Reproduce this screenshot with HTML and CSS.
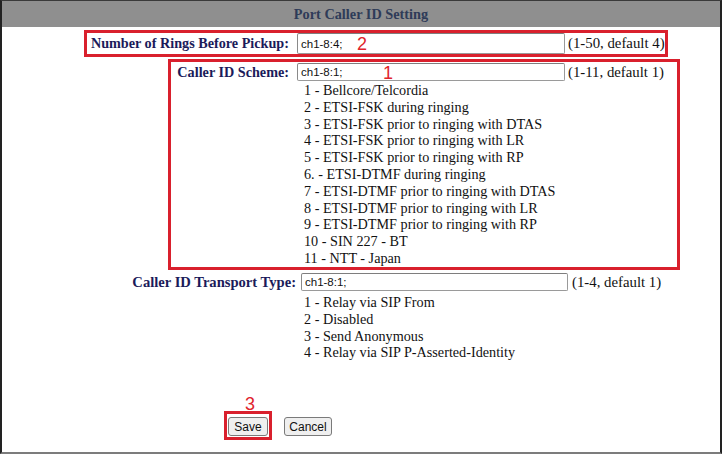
FILE: index.html
```html
<!DOCTYPE html>
<html>
<head>
<meta charset="utf-8">
<link rel="stylesheet" href="styles.css">
</head>
<body>
<div class="frame">
  <div class="header">Port Caller ID Setting</div>

  <div class="box box-rings">
    <div class="row">
      <span class="lbl lbl-rings">Number of Rings Before Pickup:</span>
      <span class="field"><input class="inp inp-rings" type="text" value="ch1-8:4;"><span class="mark mark-2">2</span></span>
      <span class="hint">(1-50, default 4)</span>
    </div>
  </div>

  <div class="box box-scheme">
    <div class="row row-scheme">
      <span class="lbl lbl-scheme">Caller ID Scheme:</span>
      <span class="field"><input class="inp inp-scheme" type="text" value="ch1-8:1;"><span class="mark mark-1">1</span></span>
      <span class="hint">(1-11, default 1)</span>
    </div>
    <ul class="opts opts-scheme">
      <li>1 - Bellcore/Telcordia</li>
      <li>2 - ETSI-FSK during ringing</li>
      <li>3 - ETSI-FSK prior to ringing with DTAS</li>
      <li>4 - ETSI-FSK prior to ringing with LR</li>
      <li>5 - ETSI-FSK prior to ringing with RP</li>
      <li>6. - ETSI-DTMF during ringing</li>
      <li>7 - ETSI-DTMF prior to ringing with DTAS</li>
      <li>8 - ETSI-DTMF prior to ringing with LR</li>
      <li>9 - ETSI-DTMF prior to ringing with RP</li>
      <li>10 - SIN 227 - BT</li>
      <li>11 - NTT - Japan</li>
    </ul>
  </div>

  <div class="transport">
    <div class="row">
      <span class="lbl lbl-transport">Caller ID Transport Type:</span>
      <input class="inp inp-transport" type="text" value="ch1-8:1;">
      <span class="hint hint-transport">(1-4, default 1)</span>
    </div>
    <ul class="opts opts-transport">
      <li>1 - Relay via SIP From</li>
      <li>2 - Disabled</li>
      <li>3 - Send Anonymous</li>
      <li>4 - Relay via SIP P-Asserted-Identity</li>
    </ul>
  </div>

  <div class="actions">
    <div class="save-wrap">
      <span class="mark mark-3">3</span>
      <button class="btn btn-save" type="button">Save</button>
    </div>
    <button class="btn btn-cancel" type="button">Cancel</button>
  </div>
</div>
</body>
</html>
```
FILE: styles.css
```css
* { box-sizing: border-box; }

html, body {
  margin: 0;
  padding: 0;
  background: #ffffff;
}

.frame {
  width: 722px;
  height: 454px;
  border-left: 2px solid #222222;
  border-right: 2px solid #222222;
  border-top: 1px solid #3a3a3a;
  border-bottom: 2px solid #7c7c7c;
  font-family: "Liberation Serif", "Times New Roman", serif;
  font-size: 14.2px;
  color: #111111;
  overflow: hidden;
}

.header {
  height: 26px;
  background: #8f8f8f;
  color: #2e3b58;
  font-weight: bold;
  font-size: 14.3px;
  text-align: center;
  line-height: 27px;
}

.row {
  display: flex;
  align-items: center;
}

.lbl {
  font-weight: bold;
  color: #1b1b5a;
  text-align: right;
  flex: none;
  white-space: nowrap;
}

.field {
  position: relative;
  display: inline-flex;
  flex: none;
}

.inp {
  font-family: "Liberation Sans", Arial, sans-serif;
  font-size: 11.5px;
  color: #111111;
  border: 1px solid #9a9a9a;
  border-top-color: #7e7e7e;
  border-left-color: #8a8a8a;
  border-radius: 2px;
  padding: 0 0 0 3px;
  background: #ffffff;
  margin: 0;
  width: 268px;
  height: 18px;
}

.hint {
  margin-left: 3px;
  white-space: nowrap;
  font-size: 14.8px;
}

.mark {
  position: absolute;
  font-family: "Liberation Sans", Arial, sans-serif;
  font-size: 18px;
  line-height: 16px;
  color: #e0242c;
}

.box {
  border: 3px solid #d9202d;
}

/* Number of rings */
.box-rings {
  margin: 3px 0 0 82px;
  width: 584px;
  height: 27px;
}
.box-rings .row { height: 21px; }
.lbl-rings { width: 202px; margin-right: 8px; }
.inp-rings { height: 21px; }
.mark-2 { left: 60px; top: 3px; }

/* Caller ID scheme */
.box-scheme {
  margin: 2px 0 0 166px;
  width: 512px;
  height: 211px;
}
.row-scheme { margin-top: 1px; }
.lbl-scheme { width: 118px; margin-right: 8px; }
.mark-1 { left: 86px; top: 2px; }

.opts {
  list-style: none;
  margin: 0;
  line-height: 16.8px;
}
.opts-scheme {
  padding: 1px 0 0 133px;
}

/* Transport */
.transport {
  margin-top: 3px;
}
.lbl-transport { width: 294px; margin-right: 5px; font-size: 14.6px; }
.inp-transport { width: 267px; }
.hint-transport { margin-left: 4px; }
.opts-transport {
  padding: 3px 0 0 302px;
}

/* Buttons */
.actions {
  display: flex;
  align-items: flex-end;
  margin: 50px 0 0 222px;
}

.save-wrap {
  position: relative;
  border: 3px solid #d9202d;
  padding: 3px 1px 1px 1px;
  margin-right: 12px;
}

.mark-3 {
  left: 18px;
  top: -18px;
}

.btn {
  font-family: "Liberation Sans", Arial, sans-serif;
  font-size: 12px;
  color: #111111;
  background: #efefef;
  border: 1px solid #7a7a7a;
  border-radius: 3px;
  padding: 0;
  margin: 0;
  height: 19px;
}
.btn-save { width: 40px; display: block; }
.btn-cancel { width: 48px; margin-bottom: 4px; }
```
